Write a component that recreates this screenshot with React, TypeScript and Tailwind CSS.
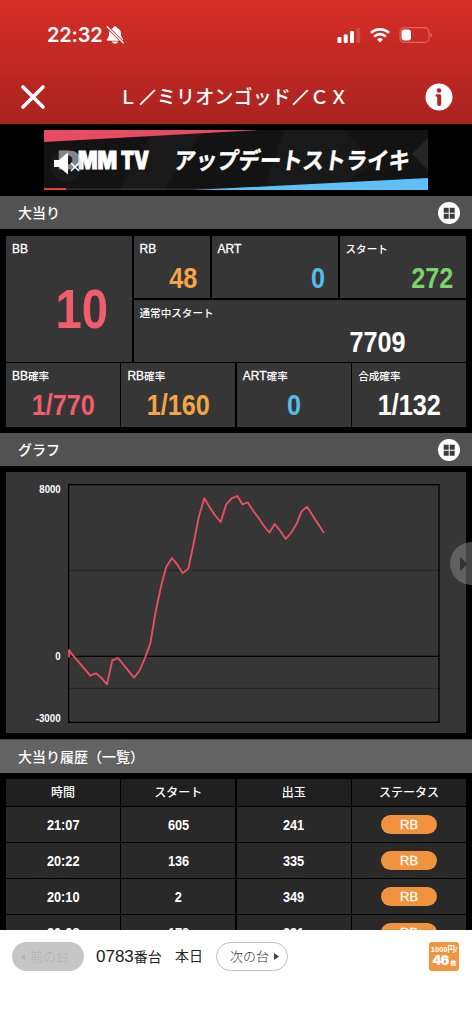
import React from 'react';

interface HistoryRow {
  time: string;
  start: string;
  payout: string;
  status: string;
}

const history: HistoryRow[] = [
  { time: '21:07', start: '605', payout: '241', status: 'RB' },
  { time: '20:22', start: '136', payout: '335', status: 'RB' },
  { time: '20:10', start: '2', payout: '349', status: 'RB' },
  { time: '20:08', start: '178', payout: '231', status: 'RB' },
];

// slump graph, three units per pixel
const graphPoints = [
  [207, 682], [207, 660], [217, 674], [271, 737], [288, 730], [304, 743], [321, 763], [337, 691], [354, 684],
  [402, 743], [418, 723], [435, 684], [451, 640], [467, 545], [484, 465], [499, 410],
  [516, 384], [532, 404], [548, 429], [565, 416], [580, 345], [597, 258], [613, 205],
  [630, 233], [646, 257], [662, 276], [679, 223], [695, 205], [712, 198], [727, 223],
  [743, 217], [760, 243], [776, 264], [792, 288], [808, 308], [824, 282], [841, 303],
  [857, 327], [873, 309], [889, 283], [905, 244], [921, 230], [937, 255], [953, 280], [972, 309],
];

const StatusBar: React.FC = () => (
  <div className="flex h-[70px] items-start justify-between pl-[47px] pr-[39px] pt-[25px]">
    <div className="flex items-center gap-[3px]">
      <span className="font-['Inter'] text-[20px] font-semibold leading-5 tracking-[-0.2px]">22:32</span>
      <svg width="18" height="20" viewBox="0 0 18 20" fill="#fff">
        <path d="M9 1.500c-1.100 0-1.900.6-2.100 1.500C4.200 3.900 3 6 3 8.500c0 3-.5 4-2 5.500-.6.700-.3 1.800.7 1.800h14.600c1 0 1.300-1.100.7-1.800-1.500-1.500-2-2.500-2-5.500 0-2.500-1.200-4.600-3.900-5.500-.2-.9-1-1.500-2.100-1.500zM6 16.600h6c-.3 1.300-1.500 2.200-3 2.200s-2.700-.9-3-2.200z" />
        <path d="M1.200 1.800l16 16" stroke="#c92b26" strokeWidth="3" />
        <path d="M1.200 1.800l16 16" stroke="#fff" strokeWidth="1.400" strokeLinecap="round" />
      </svg>
    </div>
    <div className="flex items-center gap-[9px] pt-px">
      <svg width="24" height="18" viewBox="0 0 24 18" fill="#fff">
        <rect x="0.500" y="11" width="4" height="6" rx="1" />
        <rect x="6.700" y="8.500" width="4" height="8.500" rx="1" />
        <rect x="13" y="5" width="4" height="12" rx="1" />
        <rect x="19.200" y="2" width="4" height="15" rx="1" opacity=".15" />
      </svg>
      <svg width="20" height="18" viewBox="0 0 20 18" fill="none" stroke="#fff" strokeWidth="2.700">
        <path d="M1 6.900a13 13 0 0 1 18 0" />
        <path d="M4.200 10.400a8.400 8.400 0 0 1 11.600 0" />
        <path d="M10 16.400l-2.900-3a4.200 4.200 0 0 1 5.800 0z" fill="#fff" stroke="none" />
      </svg>
      <svg width="34" height="18" viewBox="0 0 34 18">
        <rect x="1" y="1.700" width="29" height="14.700" rx="4.500" fill="none" stroke="#e4635d" strokeWidth="1.200" />
        <rect x="2.500" y="3.500" width="9.500" height="11" rx="3" fill="#fff" />
        <path d="M31.500 7v4c1.200-.3 1.600-1 1.600-2s-.4-1.700-1.600-2z" fill="#e4635d" />
      </svg>
    </div>
  </div>
);

const Slash: React.FC = () => <span className="inline-block scale-[0.82] [-webkit-text-stroke:1px_white]">／</span>;

const TitleBar: React.FC = () => (
  <div className="flex h-[54px] items-center justify-between pl-[20px] pr-[19px]">
    <svg width="26" height="26" viewBox="0 0 26 26" stroke="#fff" strokeWidth="3.600" strokeLinecap="round">
      <path d="M3 3l20 20M23 3L3 23" />
    </svg>
    <h1 className="relative -left-[2px] top-px whitespace-nowrap text-[19px] font-medium tracking-[0.15px]">
      Ｌ<Slash />ミリオンゴッド<Slash />ＣＸ
    </h1>
    <svg width="28" height="28" viewBox="0 0 28 28">
      <circle cx="14" cy="14" r="13.500" fill="#fff" />
      <circle cx="14" cy="7.500" r="2.300" fill="#b52520" />
      <path d="M11.800 11.200h2.700c1 0 1.700.7 1.700 1.700v8.100a2 2 0 0 1-4 0v-7.300h-.4a1.250 1.250 0 0 1 0-2.500z" fill="#b52520" />
    </svg>
  </div>
);

const AdBanner: React.FC = () => (
  <svg className="mx-auto block" width="384" height="60" viewBox="0 0 384 60">
    <rect width="384" height="60" fill="#131313" />
    <path d="M110 0h50l-40 60H75zM240 0h60l30 34-40 26h-70z" fill="#191919" />
    <path d="M368 24l16-16v32z" fill="#262626" />
    <path d="M0 0h215L0 12z" fill="#e84c64" />
    <path d="M0 58.500h384V60H0z" fill="#444" opacity=".6" />
    <path d="M150 60L384 48v12z" fill="#5fc0f5" />
    <g fill="#fff" fontFamily="Inter, sans-serif" fontWeight="900" fontSize="24" stroke="#fff" strokeWidth="1">
      <text x="14" y="38.500" textLength="22" lengthAdjust="spacingAndGlyphs" fill="#8c8c8c" stroke="#8c8c8c">D</text>
      <text x="34" y="38.500" textLength="39" lengthAdjust="spacingAndGlyphs">MM</text>
      <text x="77" y="38.500" textLength="28" lengthAdjust="spacingAndGlyphs">TV</text>
    </g>
    <circle cx="22" cy="36" r="16" fill="#555" opacity=".12" />
    <path d="M10 30h5l9-7.500v22l-9-7.500h-5z" fill="#fff" />
    <path d="M27 33l8 8M35 33l-8 8" stroke="#fff" strokeWidth="1.600" />
    <text
      transform="translate(129 38.500) skewX(-8)"
      textLength="236"
      lengthAdjust="spacingAndGlyphs"
      fill="#fff"
      fontFamily="'Noto Sans CJK JP', sans-serif"
      fontWeight="700"
      fontSize="23.500"
      stroke="#fff"
      strokeWidth=".4"
    >
      アップデートストライキ
    </text>
    <path d="M0 58h22v2H0z" fill="#e8402f" />
  </svg>
);

const SectionHeader: React.FC<{ title: string; grid?: boolean; light?: boolean }> = ({ title, grid, light }) => (
  <div
    className={`flex shrink-0 items-center justify-between pl-[18px] pr-[12px] ${light ? 'h-[34px] border-t border-[#484848] bg-[#636363]' : 'h-[33px] bg-[#525252]'}`}
  >
    <h2 className="text-[14px] font-medium leading-none">{title}</h2>
    {grid && (
      <svg width="22" height="22" viewBox="0 0 22 22">
        <circle cx="11" cy="11" r="11" fill="#fff" />
        <path d="M5.700 5.700h5v5h-5zM11.700 5.700h5v5h-5zM5.700 11.700h5v5h-5zM11.700 11.700h5v5h-5z" fill="#3c3c3c" />
      </svg>
    )}
  </div>
);

const StatLabel: React.FC<{ latin?: string; text?: string }> = ({ latin, text }) => (
  <div className="flex h-[20px] items-end whitespace-nowrap pl-[6px] leading-[13px]">
    {latin && <span className="text-[12px] [-webkit-text-stroke:0.3px_white]">{latin}</span>}
    {text && <span className="text-[10.600px] font-medium">{text}</span>}
  </div>
);

interface StatCellProps {
  latin?: string;
  text?: string;
  value: string;
  color: string;
  className?: string;
  valueClass?: string;
}

const StatCell: React.FC<StatCellProps> = ({ latin, text, value, color, className = '', valueClass = 'justify-end pr-[13px]' }) => (
  <div className={`flex flex-col bg-[#363636] ${className}`}>
    <StatLabel latin={latin} text={text} />
    <div className={`flex ${valueClass}`}>
      <span className={`mt-[6px] scale-x-[0.87] font-['Liberation_Sans'] text-[29px] font-bold leading-[32px] ${color}`}>
        {value}
      </span>
    </div>
  </div>
);

const Stats: React.FC = () => (
  <div className="mx-[6px] mt-[7px] flex flex-col gap-[1.5px]">
    <div className="flex h-[125.500px] gap-[1.5px]">
      <div className="w-[126px] bg-[#363636]">
        <StatLabel latin="BB" />
        <div className="flex justify-end pr-[24px] pt-[23px]">
          <span className="origin-right scale-x-[0.86] font-['Liberation_Sans'] text-[55px] font-bold leading-[60px] text-[#f05d6c]">10</span>
        </div>
      </div>
      <div className="flex flex-1 flex-col gap-[1.5px]">
        <div className="flex h-[62px] gap-[1.5px]">
          <StatCell latin="RB" value="48" color="text-[#f3a548] origin-right" className="w-[76.500px]" />
          <StatCell latin="ART" value="0" color="text-[#56bde8] origin-right" className="w-[126.500px]" />
          <StatCell text="スタート" value="272" color="text-[#7bd36b] origin-right" className="flex-1" />
        </div>
        <StatCell text="通常中スタート" value="7709" color="text-white origin-right" className="flex-1" valueClass="justify-end pr-[60px]" />
      </div>
    </div>
    <div className="grid h-[64px] grid-cols-4 gap-[1.5px]">
      <StatCell latin="BB" text="確率" value="1/770" color="text-[#f05d6c]" valueClass="justify-center" />
      <StatCell latin="RB" text="確率" value="1/160" color="text-[#f3a548]" valueClass="justify-center" />
      <StatCell latin="ART" text="確率" value="0" color="text-[#56bde8]" valueClass="justify-center" />
      <StatCell text="合成確率" value="1/132" color="text-white" valueClass="justify-center" />
    </div>
  </div>
);

const SlumpGraph: React.FC = () => (
  <div className="relative mx-[6px] mt-[6px] h-[261px] shrink-0 bg-[#363636]">
    <svg width="460" height="261" viewBox="18 126 1380 783" fill="none">
      <path d="M206 421H1317M206 775H1317" stroke="#202020" strokeWidth="2.500" />
      <path d="M206 679H1317" stroke="#000" strokeWidth="4" />
      <rect x="206" y="164" width="1111" height="713" stroke="#000" strokeWidth="4" />
      <polyline points={graphPoints.map((p) => p.join(',')).join(' ')} stroke="#e94f66" strokeWidth="5.500" strokeLinejoin="round" />
      <g fill="#fff" fontFamily="'Liberation Sans', sans-serif" fontWeight="bold" fontSize="35">
        <text x="118" y="189" textLength="64" lengthAdjust="spacingAndGlyphs">8000</text>
        <text x="166" y="690" textLength="16" lengthAdjust="spacingAndGlyphs">0</text>
        <text x="107" y="876" textLength="75" lengthAdjust="spacingAndGlyphs">-3000</text>
      </g>
    </svg>
    <div className="absolute -right-[27px] top-[70px] flex h-[43px] w-[43px] items-center rounded-full bg-[#8a8a8a]/50 pl-[10px]">
      <svg width="8" height="14" viewBox="0 0 8 14">
        <path d="M0 0l7.500 7L0 14z" fill="#333" />
      </svg>
    </div>
  </div>
);

const HistoryTable: React.FC = () => (
  <div className="mx-[6px] mt-[6px] flex flex-col gap-px">
    <div className="grid h-[27px] grid-cols-4 gap-[1.5px] text-center text-[12px] font-medium leading-[25px]">
      {['時間', 'スタート', '出玉', 'ステータス'].map((label) => (
        <div key={label} className="bg-[#202020] pt-[2px]">{label}</div>
      ))}
    </div>
    {history.map((row) => (
      <div key={row.time} className="grid h-[35px] shrink-0 grid-cols-4 gap-[1.5px] text-center font-['Liberation_Sans'] text-[15px] font-bold leading-[35px]">
        {[row.time, row.start, row.payout].map((value, i) => (
          <div key={i} className="bg-[#292929]">
            <span className="inline-block scale-x-[0.85]">{value}</span>
          </div>
        ))}
        <div className="flex items-center justify-center bg-[#292929]">
          <span className="h-[19px] w-[56px] rounded-full bg-[#f0923e] text-[13px] font-normal leading-[19px] [-webkit-text-stroke:0.3px_white]">
            {row.status}
          </span>
        </div>
      </div>
    ))}
  </div>
);

const Footer: React.FC = () => (
  <footer className="h-[94px] shrink-0 bg-white px-[12px] pt-[12px] font-light text-[#222]">
    <div className="flex h-[29px] items-center">
      <button className="flex h-[29px] w-[72px] items-center gap-[5px] rounded-full bg-[#c6c6c6] pl-[9px] text-[13px] text-[#b0b0b0]">
        <svg width="4" height="6" viewBox="0 0 4 6"><path d="M4 0v6L0 3z" fill="#b0b0b0" /></svg>
        前の台
      </button>
      <span className="ml-[12px] flex w-[67px] items-center whitespace-nowrap text-[14px] font-normal">
        <span className="font-['Liberation_Sans'] text-[17px]">0783</span>
        <span className="pt-px">番台</span>
      </span>
      <span className="ml-[12px] text-[14px] font-normal">本日</span>
      <button className="ml-[13px] flex h-[29px] w-[72px] items-center gap-[5px] rounded-full border border-[#bdbdbd] pl-[13px] text-[13px] text-[#333]">
        次の台
        <svg width="5" height="7" viewBox="0 0 5 7"><path d="M0 0v7l5-3.500z" fill="#444" /></svg>
      </button>
      <div className="ml-auto mr-[1px] flex h-[29px] w-[30px] flex-col items-center justify-center rounded-[3px] bg-[#ee9640] font-bold text-white">
        <span className="whitespace-nowrap text-[7.500px] leading-[9px]">1000円/</span>
        <span className="whitespace-nowrap font-['Inter'] text-[13px] font-black leading-[12px] tracking-[-0.8px]">
          46<span className="ml-[2px] font-['Noto_Sans_CJK_JP'] text-[6px]">枚</span>
        </span>
      </div>
    </div>
  </footer>
);

const App: React.FC = () => {
  return (
    <div className="flex h-[1024px] w-[472px] flex-col overflow-hidden bg-black font-['Liberation_Sans','Noto_Sans_CJK_JP',sans-serif] text-white">
      <header className="h-[124px] shrink-0 bg-gradient-to-b from-[#d62e28] to-[#aa231f]">
        <StatusBar />
        <TitleBar />
      </header>
      <main className="flex h-[806px] flex-col overflow-hidden">
        <div className="h-[72px] shrink-0 pt-[6px]">
          <AdBanner />
        </div>
        <SectionHeader title="大当り" grid />
        <Stats />
        <div className="h-[6px] shrink-0" />
        <SectionHeader title="グラフ" grid />
        <SlumpGraph />
        <div className="h-[6px] shrink-0" />
        <SectionHeader title="大当り履歴（一覧）" light />
        <HistoryTable />
      </main>
      <Footer />
    </div>
  );
};

export default App;
